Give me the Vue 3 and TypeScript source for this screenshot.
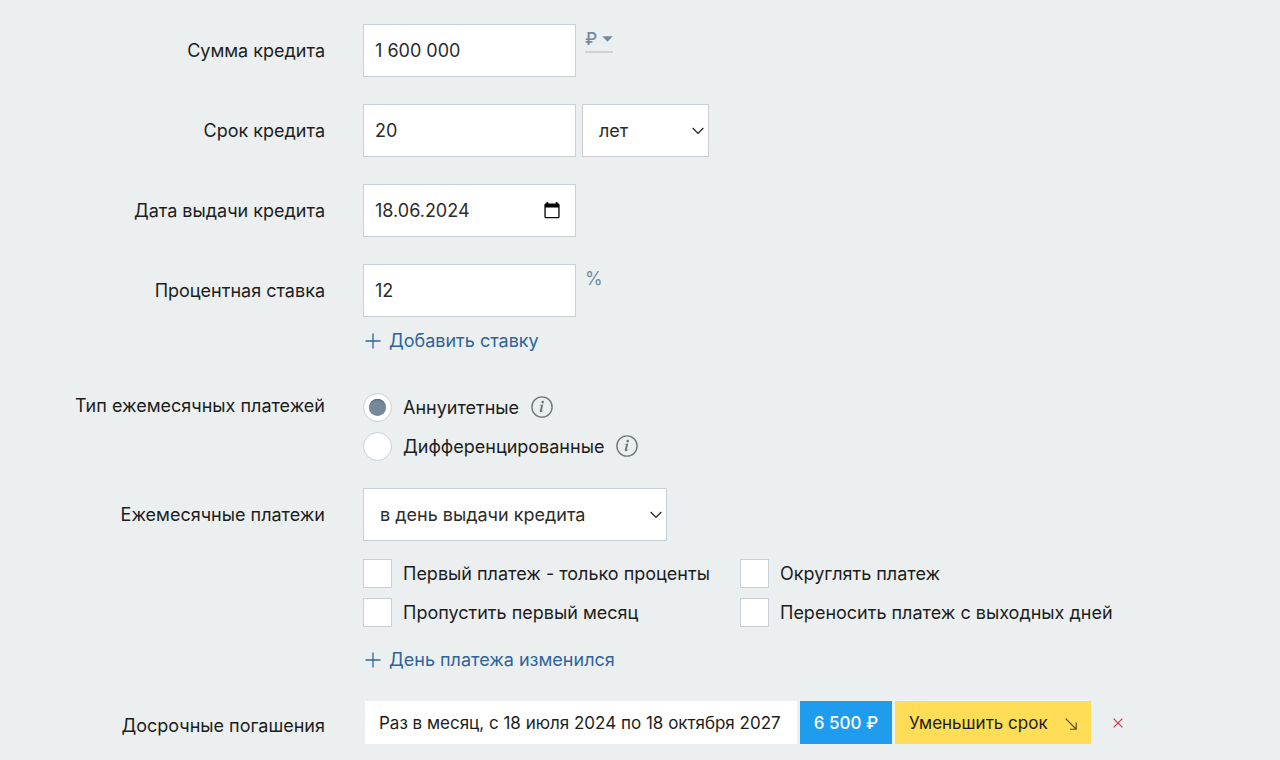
<script setup lang="ts">
import { reactive } from 'vue'

type PaymentType = 'annuity' | 'differentiated'
type OptionKey = 'interestOnly' | 'round' | 'skipFirst' | 'moveWeekend'

const form = reactive({
  amount: '1 600 000',
  term: '20',
  termUnit: 'years',
  issueDate: '18.06.2024',
  rate: '12',
  paymentType: 'annuity' as PaymentType,
  paymentDay: 'issue',
  interestOnly: false,
  round: false,
  skipFirst: false,
  moveWeekend: false,
})

const paymentTypes: { value: PaymentType; label: string }[] = [
  { value: 'annuity', label: 'Аннуитетные' },
  { value: 'differentiated', label: 'Дифференцированные' },
]

const options: { key: OptionKey; label: string }[] = [
  { key: 'interestOnly', label: 'Первый платеж - только проценты' },
  { key: 'round', label: 'Округлять платеж' },
  { key: 'skipFirst', label: 'Пропустить первый месяц' },
  { key: 'moveWeekend', label: 'Переносить платеж с выходных дней' },
]
</script>

<template>
  <form class="calculator" @submit.prevent>
    <div class="row">
      <label class="caption" for="amount">Сумма кредита</label>
      <div class="line">
        <input id="amount" v-model="form.amount" class="field" type="text" inputmode="numeric" />
        <button class="currency" type="button" aria-label="Валюта: рубль">
          <span>₽</span>
          <svg width="11" height="6" viewBox="0 0 11 6"><path d="M.3.3h10.400L5.500 5.700z" fill="currentColor" /></svg>
        </button>
      </div>
    </div>

    <div class="row">
      <label class="caption" for="term">Срок кредита</label>
      <div class="line">
        <input id="term" v-model="form.term" class="field" type="text" inputmode="numeric" />
        <div class="select unit">
          <select v-model="form.termUnit" aria-label="Единица срока">
            <option value="years">лет</option>
          </select>
          <svg class="chevron" width="12" height="8" viewBox="0 0 12 8"><path d="M.7 1 6 6.4 11.3 1" /></svg>
        </div>
      </div>
    </div>

    <div class="row">
      <label class="caption" for="date">Дата выдачи кредита</label>
      <div class="line">
        <div class="field date">
          <input id="date" v-model="form.issueDate" type="text" />
          <button type="button" aria-label="Открыть календарь">
            <svg width="16" height="17" viewBox="0 0 16 17">
              <path fill="currentColor" fill-rule="evenodd" d="M2.5 0h1.8v1.6h7.4V0h1.8v1.6h.7c.8 0 1.4.6 1.4 1.4v11.8c0 .8-.6 1.4-1.4 1.4H1.8c-.8 0-1.4-.6-1.4-1.4V3c0-.8.6-1.4 1.4-1.4h.7zM1.7 5.600v9.300h12.600V5.600z" />
            </svg>
          </button>
        </div>
      </div>
    </div>

    <div class="row wide-gap">
      <label class="caption" for="rate">Процентная ставка</label>
      <div>
        <div class="line">
          <input id="rate" v-model="form.rate" class="field" type="text" inputmode="decimal" />
          <span class="percent">%</span>
        </div>
        <a class="add add-rate" href="#">
          <svg width="16" height="16" viewBox="0 0 16 16"><path d="M8 .5v15M.5 8h15" /></svg>
          <span>Добавить ставку</span>
        </a>
      </div>
    </div>

    <div class="row" role="radiogroup" aria-labelledby="type-caption">
      <span id="type-caption" class="caption compact">Тип ежемесячных платежей</span>
      <div class="radios">
        <div v-for="item in paymentTypes" :key="item.value" class="line">
          <label class="choice">
            <input v-model="form.paymentType" type="radio" name="payment-type" :value="item.value" />
            <span>{{ item.label }}</span>
          </label>
          <button class="info" type="button" aria-label="Подсказка">
            <svg width="22" height="22" viewBox="0 0 22 22">
              <circle cx="11" cy="11" r="10.1" fill="none" stroke="currentColor" stroke-width="1.4" />
              <circle cx="11.700" cy="6.100" r="1.300" fill="currentColor" />
              <path d="m8.700 9.100 3.600-.5-1.500 6.100c-.1.500.3.400 1.300-.5l.3.400c-1.100 1.300-2 1.700-2.800 1.600-.8-.1-1-.8-.8-1.600l1.200-4.500c.1-.5-.3-.5-1.400-.5z" fill="currentColor" />
            </svg>
          </button>
        </div>
      </div>
    </div>

    <div class="row last-gap">
      <label class="caption" for="payment-day">Ежемесячные платежи</label>
      <div>
        <div class="select day">
          <select id="payment-day" v-model="form.paymentDay">
            <option value="issue">в день выдачи кредита</option>
          </select>
          <svg class="chevron" width="12" height="8" viewBox="0 0 12 8"><path d="M.7 1 6 6.4 11.3 1" /></svg>
        </div>
        <div class="options">
          <label v-for="item in options" :key="item.key" class="choice">
            <input v-model="form[item.key]" type="checkbox" />
            <span>{{ item.label }}</span>
          </label>
        </div>
        <a class="add add-day" href="#">
          <svg width="16" height="16" viewBox="0 0 16 16"><path d="M8 .5v15M.5 8h15" /></svg>
          <span>День платежа изменился</span>
        </a>
      </div>
    </div>

    <div class="row">
      <span class="caption early">Досрочные погашения</span>
      <div class="chips">
        <button class="chip period" type="button">Раз в месяц, с 18 июля 2024 по 18 октября 2027</button>
        <button class="chip sum" type="button">6 500 ₽</button>
        <button class="chip effect" type="button">
          <span>Уменьшить срок</span>
          <svg width="12" height="14" viewBox="0 0 12 14"><path d="m.7 2.700 10.300 10.300M11.200 6.500v6.700H5" fill="none" stroke="#4d4528" stroke-width="1.100" /></svg>
        </button>
        <button class="remove" type="button" aria-label="Удалить">
          <svg width="10" height="10" viewBox="0 0 10 10"><path d="m.6.600 8.800 8.800M9.400.600.600 9.400" fill="none" stroke="currentColor" stroke-width="1.200" /></svg>
        </button>
      </div>
    </div>
  </form>
</template>

<style>
body {
  margin: 0;
  background: #ebeff0;
}
</style>

<style scoped>
.calculator {
  padding-top: 24px;
  padding-bottom: 16px;
  color: #1d1d1d;
  font: 18px/26px Inter, "Liberation Sans", sans-serif;
}
.calculator * {
  box-sizing: border-box;
}
svg {
  display: block;
  flex: none;
}
button,
input,
select {
  font: inherit;
  color: inherit;
  margin: 0;
}
button {
  padding: 0;
  border: 0;
  background: none;
  cursor: pointer;
}
.row {
  display: grid;
  grid-template-columns: 325px minmax(0, 1fr);
  column-gap: 38px;
  margin-bottom: 27px;
}
.row:last-child {
  margin-bottom: 0;
}
.wide-gap {
  margin-bottom: 39px;
}
.last-gap {
  margin-bottom: 28px;
}
.caption {
  padding-top: 14px;
  text-align: right;
}
.compact {
  padding-top: 0;
}
.early {
  padding-top: 12px;
}
.line {
  display: flex;
  align-items: flex-start;
}
.field,
.select select {
  height: 53px;
  border: 1px solid #c8cfd6;
  border-radius: 0;
  background: #fff;
  color: #2b2b2b;
  outline: 0;
}
.field {
  width: 213px;
  padding: 0 11px;
}
.date {
  display: flex;
  align-items: center;
  justify-content: space-between;
  padding-right: 15px;
}
.date input {
  width: 140px;
  padding: 0;
  border: 0;
  outline: 0;
  background: none;
}
.date button {
  color: #000;
}
.currency {
  display: flex;
  align-items: center;
  gap: 5px;
  height: 29px;
  padding-top: 2px;
  margin-left: 9px;
  border-bottom: 2px solid #ccd2d5;
  color: #748a9c;
  font-size: 17px;
  font-weight: 500;
}
.percent {
  margin: 2px 0 0 9px;
  color: #748a9c;
}
.select {
  position: relative;
}
.select select {
  width: 100%;
  padding: 0 30px 0 16px;
  appearance: none;
}
.unit {
  width: 127px;
  margin-left: 6px;
}
.day {
  width: 304px;
}
.chevron {
  position: absolute;
  top: 23px;
  right: 5px;
  fill: none;
  stroke: #222;
  stroke-width: 1.3px;
  pointer-events: none;
}
.add {
  display: flex;
  align-items: center;
  gap: 8px;
  width: fit-content;
  padding-left: 2px;
  color: #2f649b;
  text-decoration: none;
}
.add svg {
  stroke: currentColor;
  stroke-width: 1.3px;
}
.add-rate {
  margin-top: 11px;
}
.add-day {
  margin-top: 20px;
}
.radios {
  display: grid;
  gap: 10px;
}
.choice {
  display: flex;
  align-items: center;
  gap: 11px;
  height: 29px;
  white-space: nowrap;
}
.choice input {
  width: 29px;
  height: 29px;
  flex: none;
  border: 1px solid #c8cfd6;
  background: #fff;
  appearance: none;
}
.choice input[type='radio'] {
  display: grid;
  place-items: center;
  border-radius: 50%;
}
.choice input[type='radio']:checked::before {
  content: '';
  width: 17px;
  height: 17px;
  border-radius: 50%;
  background: #748a9a;
  box-shadow: inset 0 1px 1px #4e6170;
}
.choice input[type='checkbox']:checked {
  background: #748a9a;
  box-shadow: inset 0 0 0 5px #fff;
}
.info {
  margin: 3px 0 0 12px;
  color: #70777a;
}
.options {
  display: grid;
  grid-template-columns: 377px auto;
  justify-content: start;
  row-gap: 10px;
  margin-top: 18px;
}
.chips {
  display: flex;
  align-items: center;
  gap: 3px;
  padding-left: 2px;
  font-size: 17px;
}
.chip {
  display: flex;
  align-items: center;
  height: 43px;
  padding: 0 14px;
  white-space: nowrap;
}
.period {
  padding: 0 16px 0 14px;
  background: #fff;
}
.sum {
  background: #209cee;
  color: #fff;
  font-weight: 500;
}
.effect {
  gap: 17px;
  background: #ffdd57;
}
.remove {
  padding: 6px;
  margin-left: 13px;
  color: #dc3048;
}
</style>
